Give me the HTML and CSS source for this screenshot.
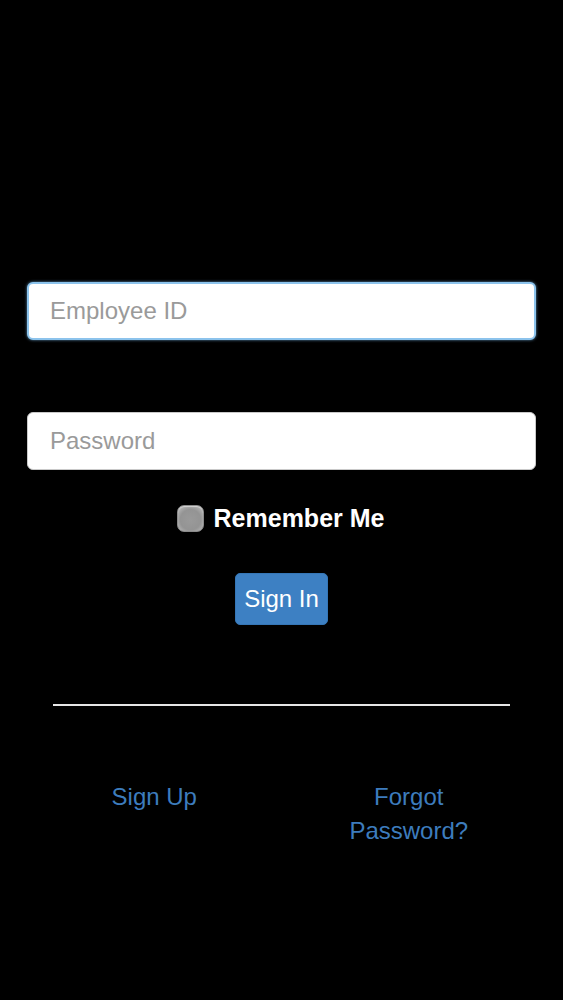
FILE: index.html
```html
<!DOCTYPE html>
<html lang="en">
<head>
<meta charset="utf-8">
<title>Sign In</title>
<link rel="stylesheet" href="styles.css">
</head>
<body>
<main class="login">
  <form class="login-form">
    <input class="field field-focus" type="text" placeholder="Employee ID">
    <input class="field field-pass" type="password" placeholder="Password">
    <label class="remember">
      <span class="check"></span>
      <span class="remember-text">Remember Me</span>
    </label>
    <div class="actions">
      <button class="btn-signin" type="button">Sign In</button>
    </div>
  </form>
  <hr class="divider">
  <div class="links">
    <div class="link-col"><a class="link" href="#">Sign Up</a></div>
    <div class="link-col"><a class="link" href="#">Forgot<br>Password?</a></div>
  </div>
</main>
</body>
</html>
```

FILE: styles.css
```css
html, body {
  margin: 0;
  padding: 0;
  background: #000;
  height: 100%;
}
body {
  font-family: "Liberation Sans", Arial, sans-serif;
  color: #fff;
}
.login {
  padding: 282px 27px 0;
}
.login-form {
  display: flex;
  flex-direction: column;
}
.field {
  box-sizing: border-box;
  width: 100%;
  height: 58px;
  margin: 0;
  padding: 0 22px;
  border: 1px solid #c9c9c9;
  border-radius: 6px;
  background: #fff;
  font-family: "Liberation Sans", Arial, sans-serif;
  font-size: 24px;
  color: #333;
  outline: none;
}
.field::placeholder {
  color: #9a9a9a;
}
.field-focus {
  border: 2px solid #8cc3ec;
  box-shadow: 0 0 3px rgba(120, 185, 235, 0.8);
  padding-left: 21px;
}
.field-pass {
  margin-top: 72px;
}
.remember {
  display: flex;
  justify-content: center;
  align-items: center;
  gap: 10px;
  margin-top: 34px;
  padding-right: 2px;
}
.check {
  box-sizing: border-box;
  width: 27px;
  height: 27px;
  border-radius: 7px;
  border: 1px solid #8a8a8a;
  background: radial-gradient(circle at 50% 55%, #9a9a9a 0%, #949494 55%, #c4c4c4 100%);
  box-shadow: inset 0 1px 1px rgba(255,255,255,0.5);
}
.remember-text {
  font-weight: bold;
  font-size: 25px;
  color: #fff;
}
.actions {
  display: flex;
  justify-content: center;
  margin-top: 40px;
}
.btn-signin {
  width: 93px;
  height: 52px;
  padding: 0;
  border: 1px solid #3576b6;
  border-radius: 5px;
  background: #3d80c3;
  color: #fff;
  font-family: "Liberation Sans", Arial, sans-serif;
  font-size: 24px;
}
.divider {
  margin: 79px 26px 0;
  border: 0;
  height: 2px;
  background: #e6e6e6;
}
.links {
  display: grid;
  grid-template-columns: 1fr 1fr;
  margin-top: 74px;
}
.link-col {
  text-align: center;
}
.link {
  color: #3d7cbd;
  text-decoration: none;
  font-size: 24px;
  line-height: 34px;
}
```
